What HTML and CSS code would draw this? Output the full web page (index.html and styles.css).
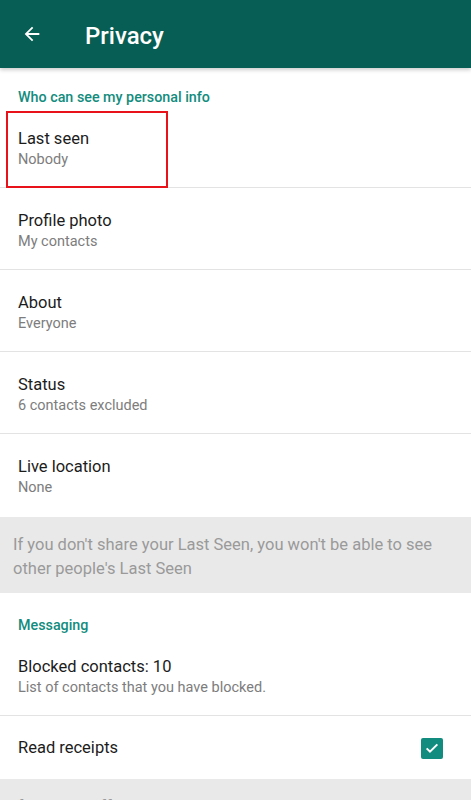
FILE: index.html
```html
<!DOCTYPE html>
<html lang="en">

<head>
  <meta charset="UTF-8">
  <meta name="viewport" content="width=device-width, initial-scale=1.0">
  <title>Privacy</title>
  <link rel="stylesheet" href="styles.css">
</head>

<body>
  <header class="toolbar">
    <button class="back" aria-label="Back">
      <svg width="22" height="22" viewBox="0 0 24 24">
        <path d="M20 11H7.83l5.59-5.59L12 4l-8 8 8 8 1.41-1.41L7.83 13H20v-2z" fill="#fff"/>
      </svg>
    </button>
    <h1>Privacy</h1>
  </header>

  <main class="settings">
    <div class="section-title first">Who can see my personal info</div>

    <div class="item highlighted">
      <div class="item-title">Last seen</div>
      <div class="item-sub">Nobody</div>
    </div>
    <div class="item">
      <div class="item-title">Profile photo</div>
      <div class="item-sub">My contacts</div>
    </div>
    <div class="item">
      <div class="item-title">About</div>
      <div class="item-sub">Everyone</div>
    </div>
    <div class="item">
      <div class="item-title">Status</div>
      <div class="item-sub">6 contacts excluded</div>
    </div>
    <div class="item last">
      <div class="item-title">Live location</div>
      <div class="item-sub">None</div>
    </div>

    <div class="note">If you don't share your Last Seen, you won't be able to see other people's Last Seen</div>

    <div class="section-title">Messaging</div>

    <div class="item">
      <div class="item-title">Blocked contacts: 10</div>
      <div class="item-sub">List of contacts that you have blocked.</div>
    </div>
    <div class="item toggle last">
      <div class="item-title">Read receipts</div>
      <span class="checkbox">
        <svg width="16" height="16" viewBox="0 0 24 24">
          <path d="M4 12.5l5 5L20 6.5" fill="none" stroke="#fff" stroke-width="3"/>
        </svg>
      </span>
    </div>

    <div class="note">If you turn off read receipts, you won't be able to see read receipts from other people. Read receipts are always sent for group chats.</div>
  </main>
</body>

</html>
```

FILE: styles.css
```css
body {
  font-family: Roboto, 'Noto Sans', sans-serif;
  background-color: #ffffff;
  color: #1c1c1c;
  margin: 0;
  overflow: hidden;
}

.toolbar {
  height: 68px;
  background-color: #075e54;
  display: flex;
  align-items: center;
  box-shadow: 0 2px 4px rgba(0, 0, 0, 0.2);
  position: relative;
  z-index: 1;
}

.toolbar .back {
  background: none;
  border: none;
  padding: 0;
  margin: 0 0 0 21px;
  width: 22px;
  height: 22px;
  display: flex;
  cursor: pointer;
}

.toolbar h1 {
  margin: 3px 0 0 42px;
  color: #ffffff;
  font-size: 24px;
  font-weight: 500;
}

.section-title {
  padding: 23px 18px 0;
  line-height: 18px;
  font-size: 14.3px;
  font-weight: 500;
  color: #128c7e;
}

.section-title.first {
  padding-top: 20px;
}

.item {
  padding: 22px 18px 17px;
  border-bottom: 1px solid #e3e3e3;
}

.item.last {
  border-bottom: none;
  padding-bottom: 19px;
}

.item.highlighted {
  position: relative;
}

.item.highlighted::after {
  content: '';
  position: absolute;
  left: 6px;
  top: 5px;
  width: 158px;
  height: 73px;
  border: 2px solid #e8121a;
}

.item-title {
  font-size: 16.5px;
  line-height: 22px;
}

.item-sub {
  font-size: 14.5px;
  line-height: 20px;
  color: #7d7d7d;
}

.item.toggle {
  display: flex;
  align-items: center;
  justify-content: space-between;
  padding: 21px 28px 20px 18px;
}

.checkbox {
  width: 22px;
  height: 21px;
  background-color: #128c7e;
  border-radius: 2px;
  display: flex;
  align-items: center;
  justify-content: center;
}

.note {
  background-color: #e9e9e9;
  color: #9a9a9a;
  font-size: 16.5px;
  line-height: 24px;
  padding: 16px 13px 12px;
}
```
